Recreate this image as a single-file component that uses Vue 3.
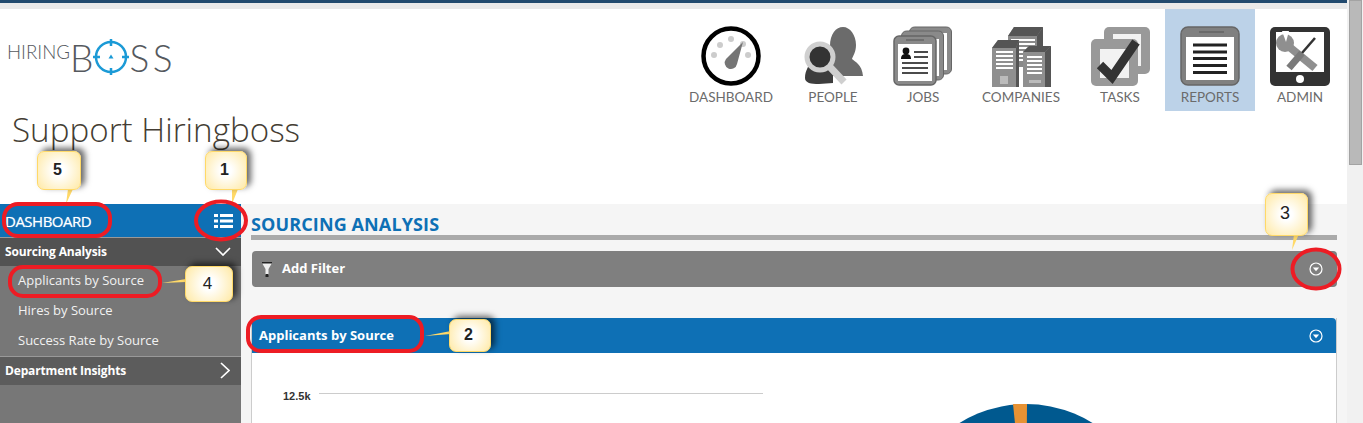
<template>
  <div class="page">
    <div class="main">
      <div class="topbar"></div>
      <header class="head">
        <div class="brand">
          <div class="logo">
            <span class="logo-a">HIRING</span><span class="logo-b">B</span>
            <svg class="logo-o" viewBox="0 0 38 38" width="38" height="38">
              <circle cx="19" cy="19" r="15" fill="none" stroke="#1b9ad6" stroke-width="2.500" />
              <path d="M19 1v7M19 30v7M1 19h7M30 19h7" stroke="#1b9ad6" stroke-width="2.500" />
              <path d="M19 16.500l2.500 4h-5z" fill="#1b9ad6" />
            </svg>
            <span class="logo-b logo-end">SS</span>
          </div>
          <h1 class="account">Support Hiringboss</h1>
        </div>
        <nav class="nav">
          <a v-for="item in navItems" :key="item.label" class="nav-item" :class="{ active: item.active }"
            :style="{ width: item.width + 'px' }">
            <svg v-if="item.label === 'DASHBOARD'" class="nav-icon" viewBox="0 0 60 62">
              <circle cx="30" cy="30" r="27.500" fill="#fff" stroke="#000" stroke-width="4.500" />
              <g fill="#ccc">
                <circle cx="13" cy="29" r="3" /><circle cx="19" cy="19" r="3" /><circle cx="30" cy="13" r="3" />
                <circle cx="42" cy="18" r="3" /><circle cx="47" cy="29" r="3" />
              </g>
              <path d="M42 16L36 38a6.200 6.200 0 1 1-11-5z" fill="#757575" />
            </svg>
            <svg v-else-if="item.label === 'PEOPLE'" class="nav-icon" viewBox="-2 0 60 62">
              <path d="M25 20C25 8 31 1 38 1s13 8 13 18c0 7-3 11-4 14 3 3 10 5 11 17H26z" fill="#6b6b6b" />
              <path d="M0 52c0-9 5-12 6-19-2-8 3-16 10-16s12 6 12 14v26l-14 1C6 58 0 57 0 52z" fill="#3d3d3d" />
              <circle cx="15" cy="31" r="13" fill="#333" stroke="#cfcfcf" stroke-width="5" />
              <path d="M25 41l14 15" stroke="#cfcfcf" stroke-width="7" />
            </svg>
            <svg v-else-if="item.label === 'JOBS'" class="nav-icon" viewBox="0 0 60 62">
              <rect x="16.500" y="1" width="42" height="47" rx="5" fill="#8a8a8a" stroke="#666" />
              <rect x="46" y="7" width="8" height="37" fill="#fff" />
              <rect x="8.500" y="5" width="42" height="49" rx="5" fill="#8a8a8a" stroke="#666" />
              <rect x="38" y="13" width="8" height="37" fill="#fff" />
              <rect x="1" y="10" width="42" height="49" rx="5" fill="#8a8a8a" stroke="#666" stroke-width="1.500" />
              <rect x="5" y="18" width="34" height="37" fill="#fff" />
              <path d="M13 14h18" stroke="#555" />
              <circle cx="13" cy="25" r="3.400" fill="#111" />
              <path d="M8 33c0-4 2-5 5-5s5 1 5 5z" fill="#111" />
              <path d="M21 26h14M21 31h14M9 37h26M9 42h26M9 47h26" stroke="#111" stroke-width="1.600" />
            </svg>
            <svg v-else-if="item.label === 'COMPANIES'" class="nav-icon" viewBox="0 0 60 62">
              <path d="M17 10l6-9h29v40H17z" fill="#8a8a8a" />
              <path d="M17 10l6-9h29l-6 9z" fill="#555" />
              <path d="M46 10l6-9v40h-6z" fill="#555" />
              <path d="M20 14h24M20 18h24M20 22h24M20 26h24M20 30h24M20 34h24" stroke="#fff" stroke-width="2" />
              <path d="M1 22l6-8h21v47H1z" fill="#8f8f8f" />
              <path d="M1 22l6-8h21l-3 8z" fill="#555" />
              <path d="M25 22l3-8v47h-3z" fill="#555" />
              <path d="M5 26h17M5 30h17M5 34h17M5 38h17M5 42h17" stroke="#fff" stroke-width="2" />
              <rect x="9" y="50" width="8" height="8" fill="#bbb" />
              <path d="M32 26l6-6h22v41H32z" fill="#8f8f8f" />
              <path d="M32 26l6-6h22l-6 6z" fill="#555" />
              <path d="M54 26l6-6v41h-6z" fill="#555" />
              <path d="M36 31h15M36 35h15M36 39h15M36 43h15M36 47h15" stroke="#fff" stroke-width="2" />
              <rect x="38" y="54" width="12" height="3" fill="#bbb" />
            </svg>
            <svg v-else-if="item.label === 'TASKS'" class="nav-icon" viewBox="0 0 60 62">
              <rect x="14" y="1" width="46" height="47" rx="5" fill="#999" />
              <rect x="23" y="8" width="28" height="32" fill="#f2f2f2" />
              <rect x="1" y="13" width="47" height="47" rx="5" fill="#999" />
              <rect x="10" y="23" width="29" height="29" fill="#f2f2f2" />
              <path d="M10 39l12 12 24-35" fill="none" stroke="#333" stroke-width="9" />
            </svg>
            <svg v-else-if="item.label === 'REPORTS'" class="nav-icon" viewBox="0 0 60 62">
              <rect x="1" y="1" width="58" height="58" rx="7" fill="#808080" stroke="#666" stroke-width="1.500" />
              <rect x="6" y="11" width="48" height="43" fill="#fff" />
              <path d="M19 6h25" stroke="#555" />
              <path d="M13 19h34M13 26h34M13 32.500h34M13 39.500h34M13 46.500h34" stroke="#222" stroke-width="3" />
            </svg>
            <svg v-else class="nav-icon" viewBox="0 0 60 62">
              <rect x="0" y="1" width="60" height="59" rx="5" fill="#333" />
              <rect x="6" y="6" width="48" height="40" fill="#fff" />
              <circle cx="30" cy="53" r="4" fill="#fff" />
              <path d="M17 19l28 23" stroke="#8f8f8f" stroke-width="8" />
              <circle cx="15" cy="17" r="9" fill="#8f8f8f" />
              <path d="M12 5l7 0-3 11z" fill="#fff" />
              <path d="M45 12L32 27" stroke="#333" stroke-width="2.500" />
              <path d="M32 27L19 42" stroke="#7a7a7a" stroke-width="7" />
            </svg>
            <span class="nav-label">{{ item.label }}</span>
          </a>
        </nav>
      </header>
      <div class="body">
        <aside class="side">
          <div class="side-head">
            <span>DASHBOARD</span>
            <svg class="list-icon" viewBox="0 0 19 14" width="19" height="14">
              <path d="M0 0h4v3H0zM6 0h13v3H6zM0 5.500h4v3H0zM6 5.500h13v3H6zM0 11h4v3H0zM6 11h13v3H6z" fill="#fff" />
            </svg>
          </div>
          <div class="side-group open">
            <span>Sourcing Analysis</span>
            <svg viewBox="0 0 16 9" width="16" height="9"><path d="M1 1l7 7 7-7" fill="none" stroke="#fff" stroke-width="1.700" /></svg>
          </div>
          <a v-for="link in sideLinks" :key="link" class="side-link">{{ link }}</a>
          <div class="side-group closed">
            <span>Department Insights</span>
            <svg viewBox="0 0 10 17" width="10" height="17"><path d="M1 1l8 7.500-8 7.500" fill="none" stroke="#fff" stroke-width="1.700" /></svg>
          </div>
        </aside>
        <main class="content">
          <h2 class="section-title">SOURCING ANALYSIS</h2>
          <div class="bar filter">
            <svg class="funnel" viewBox="0 0 10 15" width="10" height="15">
              <path d="M0 1h10L6.500 7v6h-3V7z" fill="#eee" />
              <path d="M0 0h10v1.500H0zM3.500 12h3v3h-3z" fill="#222" />
            </svg>
            <span>Add Filter</span>
            <svg class="toggle" viewBox="0 0 14 14" width="14" height="14">
              <circle cx="7" cy="7" r="6" fill="none" stroke="#fff" stroke-width="1.200" />
              <path d="M3.800 5.500h6.400L7 9.200z" fill="#fff" />
            </svg>
          </div>
          <section class="panel">
            <div class="bar panel-head">
              <span>Applicants by Source</span>
              <svg class="toggle" viewBox="0 0 14 14" width="14" height="14">
                <circle cx="7" cy="7" r="6" fill="none" stroke="#fff" stroke-width="1.200" />
                <path d="M3.800 5.500h6.400L7 9.200z" fill="#fff" />
              </svg>
            </div>
            <div class="panel-body">
              <div class="axis-row">
                <span class="axis-label">12.5k</span>
                <span class="axis-line"></span>
              </div>
              <svg class="pie" viewBox="0 0 252 252" width="252" height="252">
                <circle cx="126" cy="126" r="126" fill="#00598f" />
                <path d="M126 126L113 0h14z" fill="#e79233" />
              </svg>
            </div>
          </section>
        </main>
      </div>
    </div>
    <div class="scrollbar"><div class="thumb"></div></div>

    <svg class="marks" width="1363" height="423">
      <g fill="#ffd968">
        <path d="M68 189L66 204 73 189z" />
        <path d="M232 189L232 204 238 189z" />
        <path d="M1294 234L1292 250 1299 234z" />
        <path d="M186 279L162 283 186 282z" />
        <path d="M451 331L425 336 451 334z" />
      </g>
      <g fill="none" stroke="#ed1c24" stroke-width="4">
        <rect x="4" y="204" width="106" height="32" rx="14" />
        <ellipse cx="221" cy="220.500" rx="25" ry="19" />
        <rect x="10" y="267" width="150" height="29" rx="13" />
        <rect x="248" y="317" width="174" height="34" rx="13" />
        <ellipse cx="1316" cy="269" rx="23.500" ry="19.500" />
      </g>
    </svg>
    <div v-for="note in notes" :key="note" class="note" :class="'note-' + note">{{ note }}</div>
  </div>
</template>

<script setup>
const navItems = [
  { label: 'DASHBOARD', width: 112 },
  { label: 'PEOPLE', width: 92 },
  { label: 'JOBS', width: 88 },
  { label: 'COMPANIES', width: 108 },
  { label: 'TASKS', width: 90 },
  { label: 'REPORTS', width: 90, active: true },
  { label: 'ADMIN', width: 90 },
]

const sideLinks = ['Applicants by Source', 'Hires by Source', 'Success Rate by Source']

const notes = [5, 1, 3, 4, 2]
</script>

<style>
html,
body {
  margin: 0;
  height: 100%;
  overflow: hidden;
  background: #fff;
}
</style>

<style scoped>
.page {
  position: relative;
  display: flex;
  height: 423px;
  overflow: hidden;
  font-family: "Open Sans", sans-serif;
}

.main {
  flex: 1;
  min-width: 0;
  display: flex;
  flex-direction: column;
}

.topbar {
  height: 3px;
  border-bottom: 6px solid #e9e9e9;
  background: #224a6e;
}

.head {
  display: flex;
  justify-content: space-between;
  height: 195px;
  padding-right: 2px;
  background: #fff;
  box-sizing: border-box;
}

.brand {
  padding-left: 7px;
}

.logo {
  display: flex;
  align-items: center;
  height: 38px;
  margin-top: 29px;
  color: #55595e;
  font-family: "Lato", sans-serif;
  font-weight: 300;
}

.logo-a {
  font-size: 18.700px;
  margin-top: -10px;
}

.logo-b {
  font-size: 37px;
}

.logo-end {
  letter-spacing: 3.500px;
}

.logo-o {
  margin: 0 -1px 0 -1px;
}

.account {
  margin: 31px 0 0 5px;
  color: #443d33;
  font-size: 33.200px;
  font-weight: 300;
  line-height: 46px;
  white-space: nowrap;
}

.nav {
  display: flex;
  align-items: flex-start;
  height: 102px;
}

.nav-item {
  display: flex;
  flex-direction: column;
  align-items: center;
  height: 102px;
  padding-top: 17px;
  box-sizing: border-box;
}

.nav-item.active {
  background: #bcd2e8;
}

.nav-icon {
  display: block;
  width: 60px;
  height: 62px;
}

.nav-label {
  color: #6b6b6b;
  font-family: "Lato", sans-serif;
  font-size: 13.500px;
  line-height: 18px;
}

.body {
  flex: 1;
  display: flex;
  min-height: 0;
}

.side {
  flex: none;
  width: 241px;
  background: #777;
  color: #fff;
}

.side-head {
  display: flex;
  align-items: center;
  justify-content: space-between;
  height: 33px;
  padding: 0 8px 0 5px;
  background: #0e70b5;
  font-size: 15px;
  letter-spacing: -0.500px;
  text-shadow: 0 0 1px rgba(255, 255, 255, 0.6);
  border-bottom: 1px solid #999;
}

.side-group {
  display: flex;
  align-items: center;
  justify-content: space-between;
  height: 28px;
  padding: 0 10px 2px 5px;
  box-sizing: border-box;
  font-size: 12px;
  font-weight: 700;
  letter-spacing: -0.150px;
}

.side-group.open {
  background: #525252;
}

.side-group.closed {
  height: 29px;
  border-top: 1px solid #999;
  background: #5c5c5c;
  padding-right: 11px;
}

.side-link {
  display: block;
  height: 30px;
  padding-left: 18px;
  color: #f2f2f2;
  font-size: 13px;
  line-height: 29px;
}

.content {
  flex: 1;
  min-width: 0;
  padding: 0 10px;
  background: #f5f5f5;
}

.section-title {
  margin: 10px 0 0;
  height: 21px;
  border-bottom: 5px solid #aaa;
  color: #0e70b5;
  font-size: 18px;
  font-weight: 700;
  letter-spacing: 0.120px;
  line-height: 21px;
}

.bar {
  display: flex;
  align-items: center;
  color: #fff;
  font-size: 13px;
  font-weight: 700;
}

.bar span {
  margin-bottom: 2px;
}

.filter {
  height: 36px;
  margin: 11px 0 0 1px;
  padding: 0 14px 0 10px;
  border-radius: 4px;
  background: #7f7f7f;
}

.funnel {
  margin-right: 10px;
}

.toggle {
  margin-left: auto;
}

.panel {
  margin-top: 31px;
  border-left: 1px solid #ccc;
  border-right: 1px solid #ccc;
}

.panel-head {
  height: 35px;
  padding: 0 13px 0 7px;
  border-radius: 4px 4px 0 0;
  background: #0e70b5;
}

.panel-body {
  position: relative;
  height: 100px;
  overflow: hidden;
  background: #fff;
}

.axis-row {
  display: flex;
  align-items: center;
  width: 480px;
  padding-top: 37px;
  margin-left: 31px;
}

.axis-label {
  color: #333;
  font-family: "Liberation Sans", sans-serif;
  font-size: 11px;
  font-weight: 700;
  line-height: 13px;
}

.axis-line {
  flex: 1;
  height: 1px;
  margin: 0 0 6px 8px;
  background: #ccc;
}

.pie {
  position: absolute;
  top: 51px;
  left: 648px;
}

.scrollbar {
  flex: none;
  width: 16px;
  padding: 0 1px 0 2px;
  background: #f1f1f1;
  box-sizing: border-box;
}

.thumb {
  height: 165px;
  box-sizing: border-box;
  border: 1px solid #a3a3a3;
  background: #b9b9b9;
}

.marks {
  position: absolute;
  top: 0;
  left: 0;
  pointer-events: none;
}

.note {
  position: absolute;
  display: flex;
  align-items: center;
  justify-content: center;
  box-sizing: border-box;
  padding: 0 3px 2px 0;
  border: 1.500px solid #ffd968;
  border-radius: 7px;
  background: radial-gradient(circle, #fff 20%, #ffe9a4 100%);
  box-shadow: 4px -3px 6px rgba(0, 0, 0, 0.6);
  color: #222;
  font-family: "Liberation Sans", sans-serif;
  font-size: 16px;
  font-weight: 700;
}

.note-5 {
  left: 37px;
  top: 151px;
  width: 44px;
  height: 39px;
}

.note-1 {
  left: 205px;
  top: 151px;
  width: 42px;
  height: 39px;
}

.note-3 {
  left: 1265px;
  top: 193px;
  width: 43px;
  height: 43px;
  font-size: 18px;
  font-weight: 400;
}

.note-4 {
  left: 185px;
  top: 266px;
  width: 48px;
  height: 36px;
  padding-bottom: 0;
  font-size: 17px;
  font-weight: 400;
}

.note-2 {
  left: 449px;
  top: 319px;
  width: 42px;
  height: 33px;
}
</style>
